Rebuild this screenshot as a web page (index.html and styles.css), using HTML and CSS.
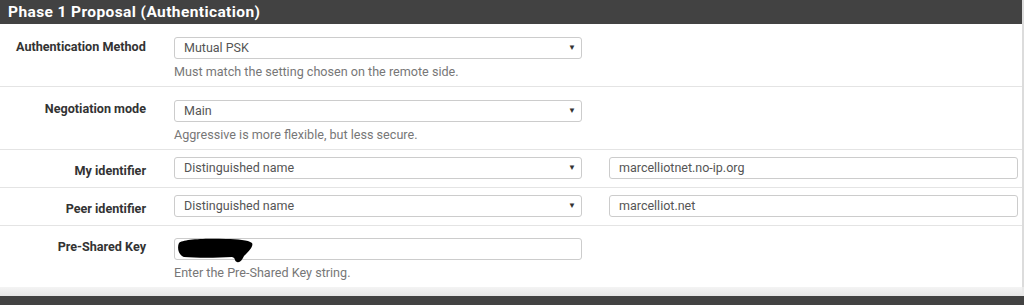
FILE: index.html
```html
<!DOCTYPE html>
<html lang="en">
<head>
    <meta charset="UTF-8">
    <title>Phase 1 Proposal</title>
    <link rel="stylesheet" href="styles.css">
</head>
<body>
    <div class="panel">
        <div class="panel-heading">Phase 1 Proposal (Authentication)</div>
        <div class="panel-body">
            <div class="row tall">
                <label class="row-label">Authentication Method</label>
                <div class="field">
                    <div class="select">Mutual PSK<span class="caret">&#9660;</span></div>
                    <div class="help">Must match the setting chosen on the remote side.</div>
                </div>
            </div>
            <div class="row tall">
                <label class="row-label">Negotiation mode</label>
                <div class="field">
                    <div class="select">Main<span class="caret">&#9660;</span></div>
                    <div class="help">Aggressive is more flexible, but less secure.</div>
                </div>
            </div>
            <div class="row">
                <label class="row-label low">My identifier</label>
                <div class="field">
                    <div class="select">Distinguished name<span class="caret">&#9660;</span></div>
                </div>
                <div class="field second">
                    <div class="input">marcelliotnet.no-ip.org</div>
                </div>
            </div>
            <div class="row">
                <label class="row-label low">Peer identifier</label>
                <div class="field">
                    <div class="select">Distinguished name<span class="caret">&#9660;</span></div>
                </div>
                <div class="field second">
                    <div class="input">marcelliot.net</div>
                </div>
            </div>
            <div class="row tall last">
                <label class="row-label">Pre-Shared Key</label>
                <div class="field">
                    <div class="input secret">
                        <!-- redacted key -->
                        <svg class="blot" width="80" height="26" viewBox="0 0 80 26">
                            <path d="M3 5 C6 1 30 0 50 1 C62 1 72 2 76 5 C78 8 72 14 68 18 C66 22 64 25 61 24 C58 23 60 20 56 19 C40 20 20 20 8 19 C2 17 1 9 3 5 Z" fill="#000"/>
                        </svg>
                    </div>
                    <div class="help">Enter the Pre-Shared Key string.</div>
                </div>
            </div>
        </div>
    </div>
    <div class="gap"></div>
    <div class="panel-heading next"></div>
</body>
</html>
```

FILE: styles.css
```css
body {
    margin: 0;
    padding: 0;
    background-color: #e9e9e9;
    font-family: Roboto, 'Liberation Sans', sans-serif;
    overflow: hidden;
}

.panel {
    width: 1022px;
    background-color: #fff;
    border-right: 2px solid #dcdcdc;
}

.panel-heading {
    height: 24px;
    line-height: 25px;
    padding-left: 8px;
    background-color: #424242;
    color: #fff;
    font-size: 15.5px;
    font-weight: 700;
    letter-spacing: 0.4px;
}

.panel-heading.next {
    height: 9px;
    width: 1016px;
}

.row {
    display: flex;
    align-items: flex-start;
    padding: 7px 0 8px;
    border-bottom: 1px solid #e4e4e4;
}

.row.tall {
    padding: 13px 0 6px;
}

.row.last {
    padding-top: 12px;
    border-bottom: none;
}

.row-label {
    width: 146px;
    padding-right: 14px;
    text-align: right;
    font-size: 12.6px;
    font-weight: 700;
    color: #333;
    line-height: 16px;
    padding-top: 1px;
    box-sizing: content-box;
}

.row.tall:first-child .row-label {
    padding-top: 2px;
    text-align: left;
    padding-left: 16px;
    width: 130px;
}

.row-label.low {
    padding-top: 6px;
}

.field {
    width: 408px;
    margin-left: 14px;
}

.field.second {
    width: 409px;
    margin-left: 27px;
}

.select, .input {
    position: relative;
    height: 20px;
    line-height: 20px;
    border: 1px solid #ccc;
    border-radius: 3px;
    padding-left: 9px;
    font-size: 12.5px;
    color: #555;
}

.caret {
    position: absolute;
    right: 5px;
    top: 0;
    font-size: 8px;
    color: #333;
}

.help {
    margin-top: 5px;
    line-height: 16px;
    font-size: 12.6px;
    color: #777;
}

.blot {
    position: absolute;
    left: 1px;
    top: -1px;
}

.gap {
    height: 9px;
    width: 1022px;
    background: linear-gradient(#f4f4f4, #e6e6e6);
}
```
